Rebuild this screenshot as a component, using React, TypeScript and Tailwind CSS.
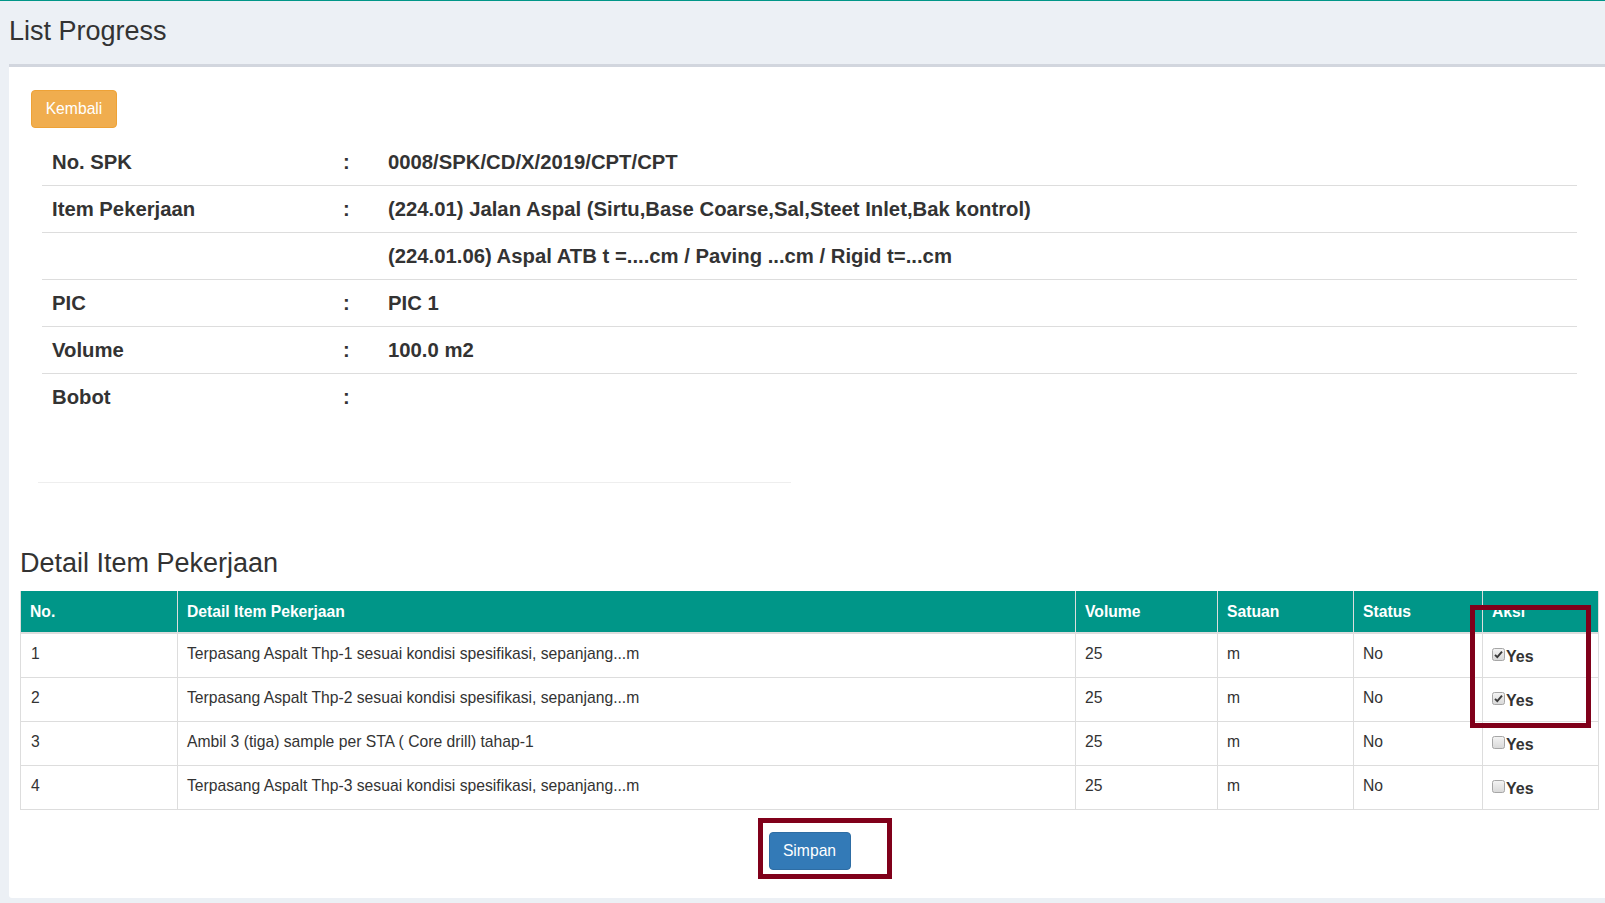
import React from 'react';

const info = [
  { label: 'No. SPK', colon: ':', value: '0008/SPK/CD/X/2019/CPT/CPT' },
  { label: 'Item Pekerjaan', colon: ':', value: '(224.01) Jalan Aspal (Sirtu,Base Coarse,Sal,Steet Inlet,Bak kontrol)' },
  { label: '', colon: '', value: '(224.01.06) Aspal ATB t =....cm / Paving ...cm / Rigid t=...cm' },
  { label: 'PIC', colon: ':', value: 'PIC 1' },
  { label: 'Volume', colon: ':', value: '100.0 m2' },
  { label: 'Bobot', colon: ':', value: '' },
];

const rows = [
  { no: 1, detail: 'Terpasang Aspalt Thp-1 sesuai kondisi spesifikasi, sepanjang...m', checked: true },
  { no: 2, detail: 'Terpasang Aspalt Thp-2 sesuai kondisi spesifikasi, sepanjang...m', checked: true },
  { no: 3, detail: 'Ambil 3 (tiga) sample per STA ( Core drill) tahap-1', checked: false },
  { no: 4, detail: 'Terpasang Aspalt Thp-3 sesuai kondisi spesifikasi, sepanjang...m', checked: false },
];

function Checkbox({ checked }: { checked: boolean }) {
  return (
    <svg width="13" height="13" viewBox="0 0 13 13" className="mt-[5px] shrink-0">
      <defs>
        <linearGradient id="cbg" x1="0" y1="0" x2="0" y2="1">
          <stop offset="0" stopColor="#f4f4f4" />
          <stop offset="1" stopColor="#d8d8d8" />
        </linearGradient>
      </defs>
      <rect x="0.5" y="0.5" width="12" height="12" rx="2" fill="url(#cbg)" stroke="#a6a6a6" />
      {checked && <path d="M3 6.8 L5.3 9.2 L10 3.6" fill="none" stroke="#3a3a3a" strokeWidth="1.9" />}
    </svg>
  );
}

export default function App() {
  return (
    <div className="relative min-h-screen overflow-hidden border-t border-[#009688] bg-[#ecf0f5] font-['Liberation_Sans',Arial,sans-serif] text-[#333]">
      <div className="pl-[9px] pt-[15px] pb-[18px]">
        <h1 className="text-[27px] leading-[30px] font-normal">List Progress</h1>
      </div>

      <div className="ml-[9px] rounded-bl-[3px] border-t-[3px] border-[#d2d6de] bg-white pt-[23px] pb-[28px]">
        <button className="ml-[22px] h-[38px] w-[86px] rounded-[4px] border border-[#eea236] bg-[#f0ad4e] text-[15.7px] text-white">
          Kembali
        </button>

        <div className="mt-[11px] ml-[33px] mr-[28px]">
          {info.map((r, i) => (
            <div
              key={i}
              className={`flex h-[47px] items-center text-[20.3px] font-bold ${i < info.length - 1 ? 'border-b border-[#ddd]' : ''}`}
            >
              <div className="w-[291px] pl-[10px]">{r.label}</div>
              <div className="w-[46px] pl-[10px]">{r.colon}</div>
              <div className="pl-[9px]">{r.value}</div>
            </div>
          ))}
        </div>

        <div className="mt-[61px] ml-[29px] h-px w-[753px] bg-[#eeeeee]" />

        <h3 className="mt-[65px] ml-[11px] text-[27px] leading-[30px] font-normal">Detail Item Pekerjaan</h3>

        <div className="mt-[13px] ml-[11px] w-[1579px] border-x border-[#ddd] text-[15.7px]">
          <div className="flex h-[43px] border-b-2 border-[#ddd] bg-[#009688] font-bold text-white">
            <div className="flex w-[157px] items-center border-r border-[#ddd] pl-[9px]">No.</div>
            <div className="flex w-[898px] items-center border-r border-[#ddd] pl-[9px]">Detail Item Pekerjaan</div>
            <div className="flex w-[142px] items-center border-r border-[#ddd] pl-[9px]">Volume</div>
            <div className="flex w-[136px] items-center border-r border-[#ddd] pl-[9px]">Satuan</div>
            <div className="flex w-[129px] items-center border-r border-[#ddd] pl-[9px]">Status</div>
            <div className="flex flex-1 items-center pl-[9px]">Aksi</div>
          </div>
          {rows.map((r) => (
            <div key={r.no} className="flex h-[44px] border-b border-[#ddd] leading-[22.4px]">
              <div className="w-[157px] border-r border-[#ddd] pt-[9px] pl-[10px]">{r.no}</div>
              <div className="w-[898px] border-r border-[#ddd] pt-[9px] pl-[9px]">{r.detail}</div>
              <div className="w-[142px] border-r border-[#ddd] pt-[9px] pl-[9px]">25</div>
              <div className="w-[136px] border-r border-[#ddd] pt-[9px] pl-[9px]">m</div>
              <div className="w-[129px] border-r border-[#ddd] pt-[9px] pl-[9px]">No</div>
              <div className="flex flex-1 items-start pt-[9px] pl-[9px]">
                <Checkbox checked={r.checked} />
                <span className="mt-[3px] pl-[1px] text-[16px] font-bold">Yes</span>
              </div>
            </div>
          ))}
        </div>

        <div className="mt-[22px] ml-[11px] flex w-[1579px] justify-center">
          <button className="h-[38px] w-[82px] rounded-[4px] border border-[#2e6da4] bg-[#337ab7] text-[15.7px] text-white">
            Simpan
          </button>
        </div>
      </div>

      <div className="absolute left-[1470px] top-[604px] h-[123px] w-[121px] border-[5px] border-[#80001a]" />
      <div className="absolute left-[758px] top-[817px] h-[61px] w-[134px] border-[5px] border-[#80001a]" />
    </div>
  );
}
